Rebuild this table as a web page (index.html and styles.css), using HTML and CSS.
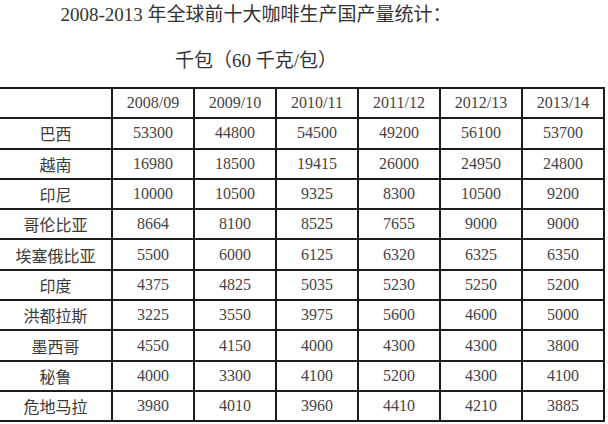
FILE: index.html
```html
<!DOCTYPE html>
<html lang="zh-CN">
<head>
<meta charset="utf-8">
<title>咖啡生产国产量统计</title>
<link rel="stylesheet" href="styles.css">
</head>
<body>
<header class="heading">
  <h1 class="title">2008-2013 年全球前十大咖啡生产国产量统计：</h1>
  <p class="unit">千包（60 千克/包）</p>
</header>
<div class="table" role="table">
  <div class="cell"></div>
  <div class="cell num">2008/09</div>
  <div class="cell num">2009/10</div>
  <div class="cell num">2010/11</div>
  <div class="cell num">2011/12</div>
  <div class="cell num">2012/13</div>
  <div class="cell num">2013/14</div>

  <div class="cell name">巴西</div>
  <div class="cell num">53300</div><div class="cell num">44800</div><div class="cell num">54500</div><div class="cell num">49200</div><div class="cell num">56100</div><div class="cell num">53700</div>

  <div class="cell name">越南</div>
  <div class="cell num">16980</div><div class="cell num">18500</div><div class="cell num">19415</div><div class="cell num">26000</div><div class="cell num">24950</div><div class="cell num">24800</div>

  <div class="cell name">印尼</div>
  <div class="cell num">10000</div><div class="cell num">10500</div><div class="cell num">9325</div><div class="cell num">8300</div><div class="cell num">10500</div><div class="cell num">9200</div>

  <div class="cell name">哥伦比亚</div>
  <div class="cell num">8664</div><div class="cell num">8100</div><div class="cell num">8525</div><div class="cell num">7655</div><div class="cell num">9000</div><div class="cell num">9000</div>

  <div class="cell name">埃塞俄比亚</div>
  <div class="cell num">5500</div><div class="cell num">6000</div><div class="cell num">6125</div><div class="cell num">6320</div><div class="cell num">6325</div><div class="cell num">6350</div>

  <div class="cell name">印度</div>
  <div class="cell num">4375</div><div class="cell num">4825</div><div class="cell num">5035</div><div class="cell num">5230</div><div class="cell num">5250</div><div class="cell num">5200</div>

  <div class="cell name">洪都拉斯</div>
  <div class="cell num">3225</div><div class="cell num">3550</div><div class="cell num">3975</div><div class="cell num">5600</div><div class="cell num">4600</div><div class="cell num">5000</div>

  <div class="cell name">墨西哥</div>
  <div class="cell num">4550</div><div class="cell num">4150</div><div class="cell num">4000</div><div class="cell num">4300</div><div class="cell num">4300</div><div class="cell num">3800</div>

  <div class="cell name">秘鲁</div>
  <div class="cell num">4000</div><div class="cell num">3300</div><div class="cell num">4100</div><div class="cell num">5200</div><div class="cell num">4300</div><div class="cell num">4100</div>

  <div class="cell name">危地马拉</div>
  <div class="cell num">3980</div><div class="cell num">4010</div><div class="cell num">3960</div><div class="cell num">4410</div><div class="cell num">4210</div><div class="cell num">3885</div>
</div>
</body>
</html>
```

FILE: styles.css
```css
html, body {
  margin: 0;
  padding: 0;
  background: #ffffff;
}

body {
  font-family: "Liberation Serif", "Noto Sans CJK SC", serif;
  color: #3a3a3a;
  overflow: hidden;
}

.heading {
  width: 512px;
  text-align: center;
}

.title {
  margin: 0;
  font-size: 19px;
  font-weight: 400;
  line-height: 30px;
  color: #333333;
}

.unit {
  margin: 16px 0 0;
  font-size: 19px;
  line-height: 30px;
  color: #333333;
}

.table {
  margin-top: 11px;
  display: grid;
  grid-template-columns: 111px repeat(6, 80px);
  grid-auto-rows: 28.3px;
  column-gap: 2px;
  row-gap: 2px;
  padding: 2px 2px 2px 0;
  width: max-content;
  background: #1c1c1c;
}

.cell {
  background: #ffffff;
  display: flex;
  align-items: center;
  justify-content: center;
  font-size: 16px;
  color: #444444;
}

.name {
  font-family: "Noto Sans CJK SC", sans-serif;
  font-weight: 400;
  font-size: 16px;
  color: #3a3a3a;
}

.num {
  font-family: "Liberation Serif", serif;
  font-size: 16px;
}
```
